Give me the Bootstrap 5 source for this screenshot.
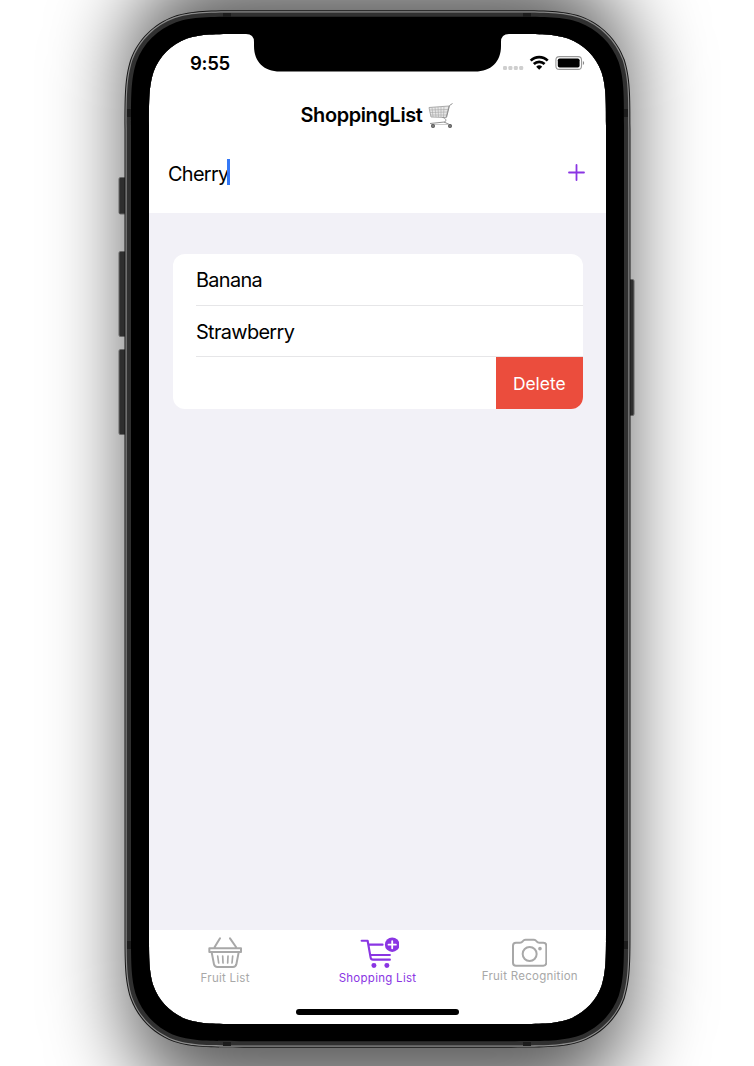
<!DOCTYPE html>
<html lang="en">
<head>
<meta charset="utf-8">
<meta name="viewport" content="width=device-width, initial-scale=1">
<title>ShoppingList</title>
<link href="https://cdn.jsdelivr.net/npm/bootstrap@5.3.0/dist/css/bootstrap.min.css" rel="stylesheet">
<style>
  body { font-family: Inter, Roboto, sans-serif; background: #fff; color: #000; }
  .stage { width: 754px; height: 1066px; padding: 34px 148px 42px 149px; isolation: isolate; }
  .phone-shadow { left: 127px; top: -26px; width: 501px; height: 1122px; border-radius: 90px; filter: blur(40px); background: rgba(0,0,0,.64); z-index: -1; }
  .phone-frame { left: 0; top: 0; z-index: 5; pointer-events: none; }
  .phone-screen { height: 990px; background: #fff; }
  .status-row { height: 58px; padding: 0 20px 0 41px; font-weight: 600; font-size: 18.6px; line-height: 58px; letter-spacing: -.3px; }
  .title-row { height: 48px; font-weight: 600; font-size: 19.9px; letter-spacing: -.36px; padding-right: 1px; }
  .input-row { height: 73px; padding: 0 21px 8px 19px; font-size: 19.9px; letter-spacing: -.7px; }
  .caret { width: 2.5px; height: 26px; background: #3478f6; margin-left: -1px; }
  .list-area { background: #f2f1f7; padding: 41px 23.5px 0; }
  .fruit-card { border: 0; border-radius: 12px; overflow: hidden; height: 155px; }
  .fruit-row { height: 51.7px; margin-left: 23.5px; padding-top: 4px; font-size: 19.9px; border-bottom: 1px solid #e6e6e8; letter-spacing: -.66px; }
  .delete-btn { width: 86.5px; height: 51.6px; background: #eb4d3d; border: 0; border-radius: 0; color: #fff; font-size: 17.4px; padding: 1px 0 0; }
  .tab-row { height: 94px; color: #a8a8a8; font-size: 11.5px; }
  .tab-row .on { color: #8a35e3; }
  .tab-cell { line-height: 18px; letter-spacing: .27px; padding-top: 7px; }
  .home-bar { left: 147px; bottom: 9.5px; width: 163px; height: 5.5px; background: #000; }
</style>
</head>
<body>
<main class="stage position-relative overflow-hidden">
  <div class="phone-shadow position-absolute"></div>

  <section class="phone-screen d-flex flex-column position-relative">
    <div class="status-row d-flex justify-content-between">
      <span>9:55</span>
      <svg width="84" height="20" viewBox="502 53 84 20" style="margin-top:19px">
        <g fill="#cfcfcf"><rect x="503" y="66" width="4" height="4" rx="1.2"/><rect x="508.4" y="66" width="4" height="4" rx="1.2"/><rect x="513.8" y="66" width="4" height="4" rx="1.2"/><rect x="519.2" y="66" width="4" height="4" rx="1.2"/></g>
        <g fill="none" stroke="#000" stroke-width="2.7"><path d="M530.7 60.600a12 12 0 0 1 17 0"/><path d="M533.800 64a7.800 7.800 0 0 1 10.800 0"/></g>
        <path d="M536.200 66.700a4.400 4.400 0 0 1 6 0l-3 3z"/>
        <rect x="555.9" y="56.600" width="25.600" height="12.800" rx="3.400" fill="none" stroke="#999" stroke-width="1.100"/>
        <rect x="557.800" y="58.500" width="21.800" height="9" rx="1.800"/>
        <path d="M582.900 61c1.600.8 1.600 3.300 0 4.100z" fill="#888"/>
      </svg>
    </div>

    <header class="title-row d-flex align-items-center justify-content-center">
      <span>ShoppingList</span>
      <svg width="25" height="26" viewBox="0 0 25 26" fill="none" role="img" aria-label="cart" style="margin-left:6px">
        <path d="M1 4.500 21 3 18 14.500 3 14z" fill="#e8e8e8" stroke="#999" stroke-width=".8"/>
        <path d="M1.500 7 20 6.500M2 9.500 19.500 9M2.500 12 18.700 12M4 4.500 5 14M7 4.300 8 14M10 4 10.500 14M13 4 13 14M16 3.500 15.500 14" stroke="#a6a6a6" stroke-width=".6"/>
        <path d="M24.500.5 21.500 2.500 18.500 14.500 M14.500 14.500c4 .5 4 4 2 4.500L2 20.500M16 19l6.500 3" stroke="#858585" stroke-width=".9"/>
        <path d="M3 21.500 22 21.500" stroke="#ccc" stroke-width="1"/>
        <circle cx="5" cy="23" r="2" fill="#555"/><circle cx="22" cy="23" r="2" fill="#555"/>
        <circle cx="5" cy="23" r=".7" fill="#bbb"/><circle cx="22" cy="23" r=".7" fill="#bbb"/>
      </svg>
    </header>

    <div class="input-row d-flex align-items-center justify-content-between">
      <div class="d-flex align-items-center"><span class="pt-1">Cherry</span><span class="caret"></span></div>
      <svg width="17" height="17" viewBox="0 0 17 17" stroke="#8a35e3" stroke-width="1.8" stroke-linecap="round"><path d="M8.500 1v15M1 8.500h15"/></svg>
    </div>

    <div class="list-area flex-grow-1">
      <div class="card fruit-card">
        <div class="fruit-row d-flex align-items-center"><span>Banana</span></div>
        <div class="fruit-row d-flex align-items-center"><span>Strawberry</span></div>
        <div class="d-flex justify-content-end"><button class="btn delete-btn">Delete</button></div>
      </div>
    </div>

    <nav class="tab-row row g-0 text-center">
      <div class="col tab-cell">
        <svg class="d-block mx-auto" width="34.7" height="32" viewBox="174 36 104 96" fill="none" stroke="currentColor" stroke-width="6" stroke-linecap="round" stroke-linejoin="round"><path d="M210 40 194 66M240 40 258 66M178 70H273V81H178ZM185 82 192 118Q194 126 202 126H249Q257 126 259 118L266 82"/><path stroke-width="5" d="M203 93 206 114M218 93 219 114M234 93 233 114M248 93 246 114"/></svg>
        <span>Fruit List</span>
      </div>
      <div class="col tab-cell on">
        <svg class="d-block mx-auto" width="39.500" height="32" viewBox="629 36 119 96" fill="none" stroke="currentColor" stroke-width="6.500" stroke-linecap="round" stroke-linejoin="round" style="transform:translateX(2px)"><path d="M634 47H652L661 98Q662 104 668 104H719M656 59H697M661 90H719"/><g fill="currentColor" stroke="none"><circle cx="671" cy="122" r="7.500"/><circle cx="710" cy="122" r="7.500"/><circle cx="726" cy="59" r="22"/></g><path stroke="#fff" stroke-width="5.500" d="M726 48V70M715 59H737"/></svg>
        <span>Shopping List</span>
      </div>
      <div class="col tab-cell">
        <svg class="d-block mx-auto" width="35.300" height="30" viewBox="426 37 106 90" fill="none" stroke="currentColor" stroke-width="6" stroke-linejoin="round"><path d="M438 54H450Q455 54 458 50L461 47Q463 45 467 45H491Q495 45 497 47L500 50Q503 54 508 54H520Q529 54 529 63V114Q529 123 520 123H438Q429 123 429 114V63Q429 54 438 54Z"/><circle cx="479" cy="88" r="21"/><circle cx="510" cy="72" r="5.500" fill="currentColor" stroke="none"/></svg>
        <span>Fruit Recognition</span>
      </div>
    </nav>
    <div class="home-bar position-absolute rounded-pill"></div>
  </section>

  <svg class="phone-frame position-absolute" width="754" height="1066" viewBox="0 0 754 1066">
    <g fill="#2e2e2e" stroke="#666" stroke-width="1">
      <rect x="119" y="177.500" width="8" height="36.500" rx="1.500"/><rect x="119" y="251.500" width="8" height="85" rx="1.500"/><rect x="119" y="349.500" width="8" height="85" rx="1.500"/><rect x="627" y="279.500" width="7" height="136" rx="1.500"/>
    </g>
    <g id="frame" fill-rule="evenodd"></g>
    <g fill="#1c1c1c"><path d="M223 13h8v4h-8zM523 13h8v4h-8zM223 1042h8v4h-8zM523 1042h8v4h-8zM127 109h4v8h-4zM624 109h4v8h-4zM127 941h4v8h-4zM624 941h4v8h-4z"/></g>
    <path d="M246 33v1q8 0 8 8v4c0 16 10 25.500 26 25.500H475c16 0 26-9.500 26-25.500v-4q0-8 8-8v-1z"/>
  </svg>
</main>
<script>
  // Rounded rectangle with continuous-curvature corners
  function squircle(x0, y0, x1, y1, r) {
    const k = [1.52866, 1.08849, 0.86841, 0.63149, 0.07491, 0.37282, 0.16906].map(v => v * r);
    const corner = (cx, cy, ux, uy, vx, vy) => {
      const p = (a, b) => (cx + ux * a + vx * b).toFixed(2) + ' ' + (cy + uy * a + vy * b).toFixed(2) + ' ';
      return p(k[0], 0) + 'C' + p(k[1], 0) + p(k[2], 0) + p(k[3], k[4]) + 'C' + p(k[5], k[6]) + p(k[6], k[5]) + p(k[4], k[3]) + 'C' + p(0, k[2]) + p(0, k[1]) + p(0, k[0]);
    };
    return 'M' + corner(x1, y0, -1, 0, 0, 1) + 'L' + corner(x1, y1, 0, -1, -1, 0) + 'L' + corner(x0, y1, 1, 0, 0, -1) + 'L' + corner(x0, y0, 0, 1, 1, 0) + 'Z';
  }
  const hole = squircle(149, 34, 606, 1024, 60);
  const rings = [[0, '#161616'], [1, '#8c8c8c'], [2.2, '#303030'], [6.5, '#000']];
  document.getElementById('frame').innerHTML = rings.map(([d, c]) =>
    `<path fill="${c}" d="${squircle(124.5 + d, 10.3 + d, 630.5 - d, 1047.7 - d, 78 - d)}${hole}"/>`).join('');
</script>
<script src="https://cdn.jsdelivr.net/npm/bootstrap@5.3.0/dist/js/bootstrap.bundle.min.js"></script>
</body>
</html>
